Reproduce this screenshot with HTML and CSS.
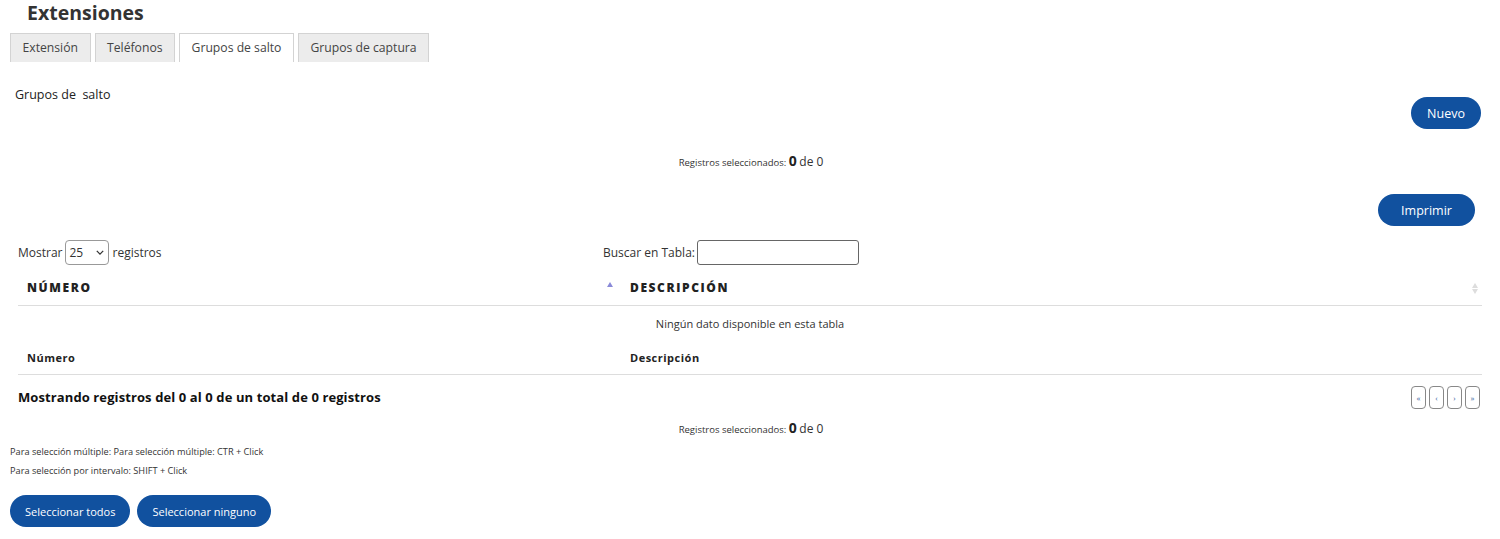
FILE: index.html
```html
<!DOCTYPE html>
<html lang="es">
<head>
<meta charset="utf-8">
<title>Extensiones</title>
<link rel="stylesheet" href="styles.css">
</head>
<body>
<div class="page">
  <h1 class="title">Extensiones</h1>
  <div class="tabs">
    <div class="tab">Extensión</div>
    <div class="tab">Teléfonos</div>
    <div class="tab active">Grupos de salto</div>
    <div class="tab">Grupos de captura</div>
  </div>
  <div class="section-label">Grupos de&nbsp; salto</div>
  <div class="right-row nuevo-row"><button class="btn btn-nuevo">Nuevo</button></div>
  <div class="selected sel-top">Registros seleccionados: <b>0</b> <span class="de">de 0</span></div>
  <div class="right-row print-row"><button class="btn btn-print">Imprimir</button></div>

  <div class="table-wrap">
    <div class="controls">
      <div class="length">Mostrar <span class="select">25<svg class="chev" viewBox="0 0 10 6" width="8" height="5"><path d="M1 1l4 4 4-4" fill="none" stroke="#333" stroke-width="1.6"/></svg></span> registros</div>
      <div class="search">Buscar en Tabla: <span class="input"></span></div>
    </div>
    <table class="grid">
      <thead>
        <tr>
          <th class="col1">NÚMERO<span class="sort-asc"></span></th>
          <th class="col2">DESCRIPCIÓN<span class="sort-both"><i class="up"></i><i class="down"></i></span></th>
        </tr>
      </thead>
      <tbody>
        <tr><td colspan="2" class="empty">Ningún dato disponible en esta tabla</td></tr>
      </tbody>
      <tfoot>
        <tr><th class="col1">Número</th><th class="col2">Descripción</th></tr>
      </tfoot>
    </table>
    <div class="info-row">
      <div class="info">Mostrando registros del 0 al 0 de un total de 0 registros</div>
      <div class="pager">
        <span class="pg">«</span><span class="pg">‹</span><span class="pg">›</span><span class="pg">»</span>
      </div>
    </div>
  </div>
  <div class="selected sel-bottom">Registros seleccionados: <b>0</b> <span class="de">de 0</span></div>
  <div class="hints">
    <p class="hint">Para selección múltiple: Para selección múltiple: CTR + Click</p>
    <p class="hint">Para selección por intervalo: SHIFT + Click</p>
  </div>
  <div class="bottom-btns">
    <button class="btn btn-sel">Seleccionar todos</button>
    <button class="btn btn-sel">Seleccionar ninguno</button>
  </div>
</div>
</body>
</html>
```
FILE: styles.css
```css
* { box-sizing: border-box; }
html, body { margin: 0; padding: 0; background: #fff; }
body {
  font-family: "Open Sans", "Noto Sans", "Liberation Sans", sans-serif;
  color: #333;
  font-size: 12px;
}
.page { padding: 0 18px 0 10px; }
.title {
  margin: 0;
  padding: 1px 0 0 17px;
  font-size: 19.5px;
  font-weight: 700;
  color: #333;
  height: 33px;
  line-height: 23px;
}
.tabs { display: flex; gap: 4px; height: 29px; }
.tab {
  background: #ececec;
  border: 1px solid #d3d3d3;
  border-bottom: none;
  padding: 0 11.5px;
  line-height: 28px;
  font-size: 12.2px;
  color: #444;
}
.tab.active { background: #fff; }
.section-label {
  margin-top: 24px;
  padding-left: 5px;
  font-size: 12.5px;
  color: #222;
  height: 18px;
  line-height: 18px;
}
.right-row { display: flex; justify-content: flex-end; }
.nuevo-row { margin-top: -7px; padding-right: 1px; }
.print-row { margin-top: 23px; padding-right: 7px; }
.btn {
  font-family: inherit;
  background: #11519f;
  color: #fff;
  border: none;
  border-radius: 16px;
  height: 32px;
  font-size: 12.5px;
  padding: 0 16px;
}
.btn-nuevo { width: 70px; padding: 0; }
.btn-print { width: 97px; padding: 0; }
.selected {
  text-align: center;
  font-size: 9.5px;
  color: #333;
  height: 20px;
  line-height: 20px;
  margin-left: 10px;
}
.selected b { font-size: 14px; color: #222; }
.selected .de { font-size: 12px; }
.sel-top { margin-top: 22px; }
.table-wrap { padding-left: 8px; margin-top: 13px; }
.controls { display: flex; align-items: center; height: 26px; font-size: 12px; color: #333; }
.length { width: 585px; display: flex; align-items: center; gap: 3px; }
.select {
  display: inline-flex;
  align-items: center;
  justify-content: space-between;
  width: 44px;
  height: 25px;
  border: 1px solid #999;
  border-radius: 4px;
  padding: 0 4px 0 3px;
  font-size: 12px;
}
.search { display: flex; align-items: center; gap: 2px; }
.input {
  display: inline-block;
  width: 162px;
  height: 25px;
  border: 1px solid #666;
  border-radius: 3px;
}
.grid { width: 100%; border-collapse: collapse; margin-top: 8px; }
.grid th { text-align: left; position: relative; }
.grid thead th {
  font-size: 12px;
  font-weight: 800;
  letter-spacing: 1.6px;
  padding: 6px 9px 8px;
  height: 32px;
  border-bottom: 1px solid #ddd;
  color: #222;
}
.col1 { width: 603px; }
.sort-asc {
  position: absolute;
  right: 8px;
  top: 9px;
  width: 0; height: 0;
  border-left: 3px solid transparent;
  border-right: 3px solid transparent;
  border-bottom: 5px solid #8a8ad8;
}
.sort-both { position: absolute; right: 4px; top: 10px; display: flex; flex-direction: column; gap: 1px; }
.sort-both i { display: block; width: 0; height: 0; border-left: 3px solid transparent; border-right: 3px solid transparent; }
.sort-both .up { border-bottom: 5px solid #ddd; }
.sort-both .down { border-top: 5px solid #ddd; }
.empty {
  text-align: center;
  font-size: 11px;
  color: #333;
  height: 36px;
  padding: 0;
  line-height: 36px;
}
.grid tfoot th {
  font-size: 11px;
  font-weight: 700;
  letter-spacing: 0.5px;
  padding: 0 9px;
  height: 33px;
  border-bottom: 1px solid #ddd;
  color: #222;
}
.info-row { display: flex; justify-content: space-between; align-items: center; margin-top: 10px; height: 24px; }
.info { font-size: 13px; font-weight: 700; color: #111; letter-spacing: 0.1px; }
.pager { display: flex; gap: 3px; padding-right: 2px; }
.pg {
  width: 15px; height: 23px;
  border: 1px solid #888;
  border-radius: 4px;
  font-size: 8px;
  display: flex; align-items: center; justify-content: center;
  color: #3a5fa0;
}
.sel-bottom { margin-top: 9px; }
.hints { margin-top: 4px; }
.hint { margin: 0; font-size: 9.2px; color: #333; height: 19px; line-height: 19px; }
.bottom-btns { display: flex; gap: 7px; margin-top: 15px; }
.btn-sel { padding: 0 15px; font-size: 11px; }
```
